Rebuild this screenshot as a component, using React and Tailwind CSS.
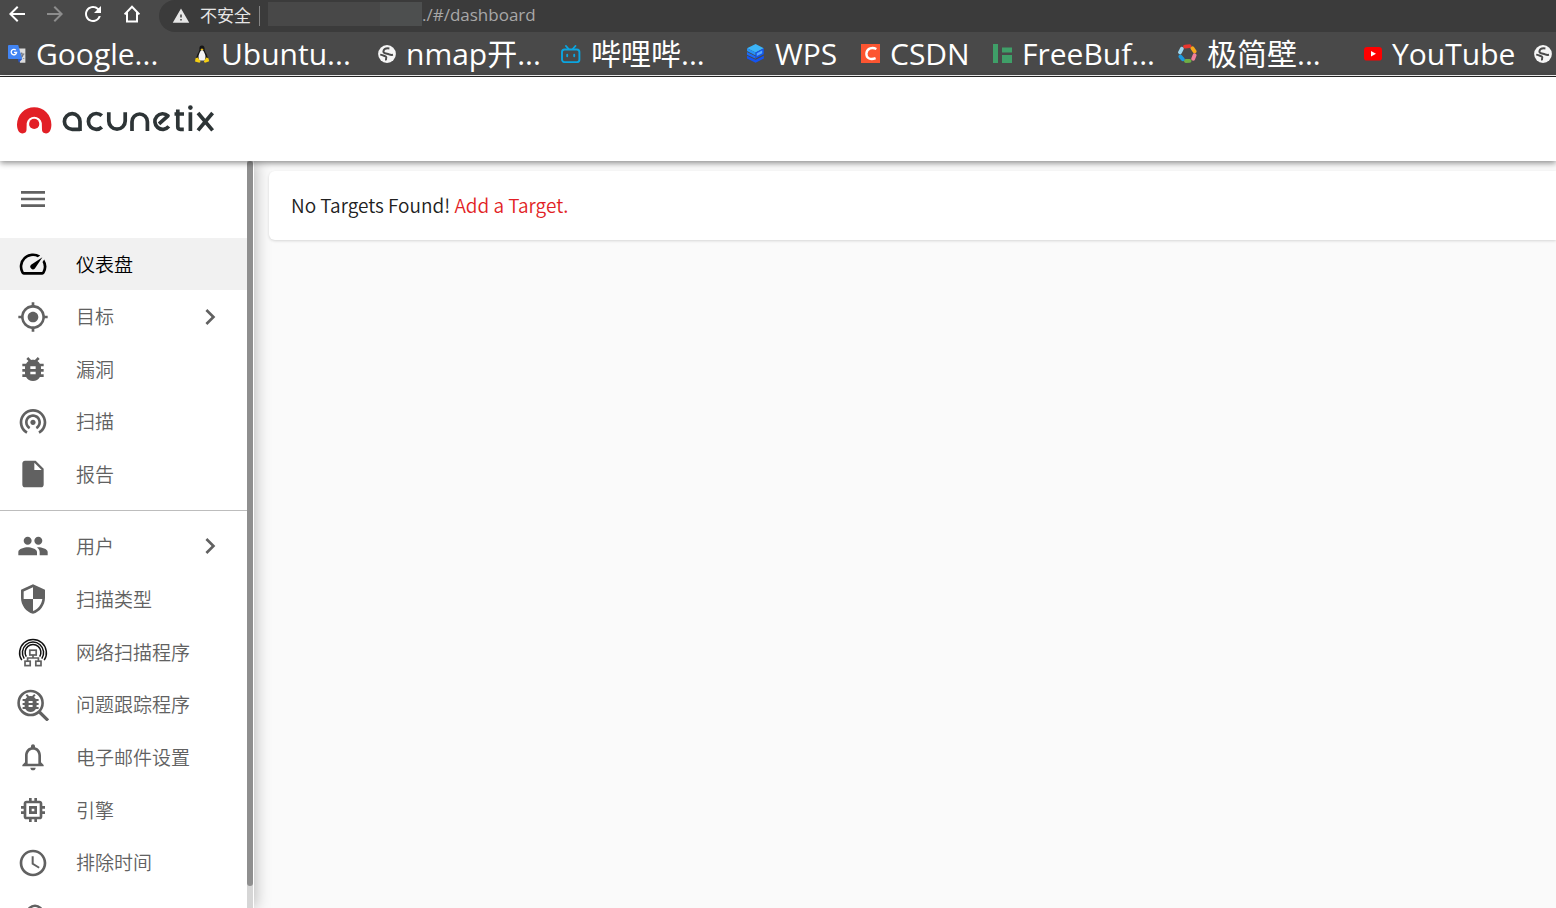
import { MdMenu, MdOutlineSpeed, MdMyLocation, MdBugReport, MdWifiTethering, MdInsertDriveFile, MdPeople, MdSecurity, MdNotificationsNone, MdMemory, MdAccessTime, MdChevronRight, MdWarning, MdArrowBack, MdArrowForward, MdRefresh } from 'react-icons/md';

function HomeIcon() {
  return (
    <svg viewBox="0 0 24 24" className="size-6" fill="none" stroke="currentColor" strokeWidth="2" aria-hidden="true">
      <path d="M5.600 12.400L13 4.800l7.400 7.600M8 10.400v9.100h10v-9.100" />
    </svg>
  );
}

function GlobeIcon() {
  return (
    <svg viewBox="0 0 18 18" className="size-[18px]" aria-hidden="true">
      <circle cx="9" cy="9" r="8.900" fill="#f5f5f5" />
      <path d="M11.400 3.400C8.400 3 5.800 4 5.400 6.400c-.2 2 2 2.200 3.800 2.400 2.200.2 2.400 1.600 5.800 1" fill="none" stroke="#4a4a4a" strokeWidth="2" />
      <path d="M2.200 9.600c2 .2 2.800 1 4.400 1.400 2 .6 2 1.600 1.400 2.800-.2.600 0 1 .2 1.600" fill="none" stroke="#4a4a4a" strokeWidth="1.900" />
    </svg>
  );
}

function TranslateIcon() {
  return (
    <svg viewBox="0 0 18 18" className="size-[18px]" aria-hidden="true">
      <path d="M8 3.600h9.400v14.200H12z" fill="#dcdcdc" />
      <path d="M11 9h5.400M13.700 7.400V9M15.400 9c-.6 2.400-2.200 3.800-3.600 4.600M12.400 9.400c.8 2 2.400 3.600 3.800 4.200" fill="none" stroke="#6b7280" strokeWidth="1.100" />
      <path d="M1 0h9.200l4 14H1a1 1 0 0 1-1-1V1a1 1 0 0 1 1-1z" fill="#4285f4" />
      <path d="M9.800 14h4.400l-3.400 3.800z" fill="#2a56c6" />
      <path d="M7.800 5.100A2.700 2.700 0 1 0 8.600 7.400H6" fill="none" stroke="#fff" strokeWidth="1.300" />
    </svg>
  );
}

function PenguinIcon() {
  return (
    <svg viewBox="0 0 18 18" className="size-[18px]" aria-hidden="true">
      <path d="M9 .4C7 .4 6.200 2 6.400 4c.1 2-.6 2.800-1.600 4.600C3.600 10.800 3 13 3.600 15h10.800c.6-2.200 0-4.400-1.200-6.400-1-1.800-1.600-2.600-1.600-4.600C11.600 1.800 10.800.4 9 .4z" fill="#161616" />
      <path d="M9 5c-1.600.6-2.200 2.200-2.900 4-.8 2-.9 4.200.4 6.400h5c1.300-2.200 1.200-4.400.4-6.400C11.200 7.200 10.600 5.600 9 5z" fill="#f4f4f4" />
      <path d="M7.400 4.200L9 3.500l1.600.7L9 5.600z" fill="#f5c518" />
      <path d="M2.600 13.200l2.200-.6 2.600 3.600c.2 1.200-.8 1.600-1.800 1.400L2 16.600zM15.400 13.200l-2.200-.6-2.200 3.600c-.2 1.200.8 1.600 1.800 1.400l3.400-1.400z" fill="#f5cf12" />
    </svg>
  );
}

function TvIcon() {
  return (
    <svg viewBox="0 0 20 18" className="h-[18px] w-5" fill="none" stroke="#0ba5e0" strokeWidth="1.900" strokeLinecap="round" aria-hidden="true">
      <rect x="1" y="4.500" width="17.400" height="12.600" rx="2.600" />
      <path d="M5 1l2.600 3M14.400 1l-2.600 3M6.200 9.800v1.400M13.200 9.800v1.400" />
    </svg>
  );
}

function StackIcon() {
  return (
    <svg viewBox="0 0 19 19" className="size-[19px]" aria-hidden="true">
      <path d="M1 11.800l8.600 4 8.200-4v2.800l-8.200 4.200L1 14.600z" fill="#1454f0" />
      <path d="M1 8l8.600 4.200v2.600L1 10.800z" fill="#1e6cf5" />
      <path d="M9.600 0l8.200 4.200-8.200 4.200L1 4.200z" fill="#3cb4f7" />
      <path d="M1 4.200l8.600 4.200v3L1 7z" fill="#2592f7" />
      <path d="M17.800 4.200L9.600 8.400v6l8.200-4.200z" fill="#1257ee" />
      <path d="M10.800 9.200l5.400-2.800v2.800l-5.400 2.800z" fill="#5aa8fa" />
    </svg>
  );
}

function CsdnIcon() {
  return (
    <svg viewBox="0 0 19 19" className="size-[19px]" aria-hidden="true">
      <rect width="19" height="19" fill="#fc5531" />
      <path d="M15.400 5C11.600 3.200 6 3.800 5.400 9.400c-.4 5.400 4.600 6.600 9.200 4.800" fill="none" stroke="#fff" strokeWidth="2.400" />
    </svg>
  );
}

function BufIcon() {
  return (
    <svg viewBox="0 0 19 19" className="size-[19px]" fill="#3f9f68" aria-hidden="true">
      <path d="M0 0h5v19H0zM9 3.500h10v5H9zM9 11h10v8H9z" />
    </svg>
  );
}

function RingIcon() {
  return (
    <svg viewBox="0 0 19 19" className="size-[19px]" fill="none" strokeWidth="3.800" strokeLinecap="round" aria-hidden="true">
      <path d="M7 2.600l4.600-.4" stroke="#e8362f" />
      <path d="M14.400 4.200l2.200 3.200" stroke="#f7a81b" />
      <path d="M16.600 11.200l-1.400 3.600" stroke="#f0809c" />
      <path d="M11.600 16.800l-3.800.2" stroke="#6fae45" />
      <path d="M4.800 15.200l-2.400-2.800" stroke="#1b9be0" />
      <path d="M2 8.400l1.800-3.600" stroke="#9bd5ee" />
    </svg>
  );
}

function PlayIcon() {
  return (
    <svg viewBox="0 0 18 14" className="h-3.5 w-[18px]" aria-hidden="true">
      <rect width="18" height="13.600" rx="3.200" fill="#f00" />
      <path d="M7 4l5 2.800L7 9.600z" fill="#fff" />
    </svg>
  );
}

function NetworkScannerIcon() {
  return (
    <svg viewBox="0 0 32 32" className="size-8" fill="none" aria-hidden="true">
      <g stroke="#111" strokeWidth="1.500">
        <path d="M4.800 24.200A13.400 13.400 0 1 1 27.200 24.200" />
        <path d="M7.200 22.600A10.600 10.600 0 1 1 24.800 22.600" />
        <path d="M9.300 20.600A7.900 7.900 0 1 1 22.700 20.600" />
      </g>
      <g stroke="#616161" strokeWidth="1.700">
        <rect x="12.800" y="14.200" width="6.400" height="4.800" fill="#fff" />
        <rect x="8" y="25.200" width="5.200" height="4.400" />
        <rect x="18.800" y="25.200" width="5.200" height="4.400" />
        <path d="M16 19v3M10.600 25v-3h10.800v3" />
      </g>
    </svg>
  );
}

function IssueTrackerIcon() {
  return (
    <svg viewBox="0 0 32 32" className="size-8" aria-hidden="true">
      <circle cx="13.600" cy="14" r="12" fill="none" stroke="#616161" strokeWidth="2.600" />
      <path d="M22.400 23l8.600 8.400" stroke="#616161" strokeWidth="3.200" />
      <path transform="translate(1.600 2)" fill="#616161" d="M20 8h-2.810c-.45-.78-1.070-1.450-1.820-1.960L17 4.410 15.590 3l-2.170 2.170C12.960 5.060 12.490 5 12 5c-.49 0-.96.06-1.410.17L8.410 3 7 4.410l1.620 1.630C7.880 6.550 7.260 7.220 6.810 8H4v2h2.090c-.05.33-.09.66-.09 1v1H4v2h2v1c0 .34.04.67.09 1H4v2h2.810c1.040 1.790 2.970 3 5.190 3s4.150-1.210 5.190-3H20v-2h-2.090c.05-.33.09-.66.09-1v-1h2v-2h-2v-1c0-.34-.04-.67-.09-1H20V8zm-6 8h-4v-2h4v2zm0-4h-4v-2h4v2z" />
    </svg>
  );
}

function ProxyIcon() {
  return (
    <svg viewBox="0 0 32 32" className="size-8" fill="none" stroke="#616161" strokeWidth="2.600" aria-hidden="true">
      <circle cx="18" cy="11.300" r="7.500" />
      <path d="M18 18.800V28M6 28h22" />
    </svg>
  );
}

function Logo() {
  return (
    <svg viewBox="0 0 200 32" className="h-8 w-[200px]" role="img" aria-label="acunetix">
      <path d="M5.600 29.500C2 29.500 0 25.500 0 20.500A17.200 17.200 0 0 1 34.400 20.500C34.400 25.500 32.500 29.500 29 29.500c-2.400 0-4-1.600-4-3.400l-.2-7.200A7.700 7.700 0 0 0 9.700 18.900L9.500 26.100c0 1.800-1.600 3.400-3.900 3.400z" fill="#e21f26" />
      <circle cx="17.200" cy="19.900" r="5.100" fill="#e21f26" />
      <g fill="none" stroke="#2d3436" strokeWidth="3.700" strokeLinejoin="round">
        <path d="M63 27V17.500A7.800 7.800 0 1 0 55.200 25.300H63" />
        <path d="M84.800 11.700A7.900 7.900 0 1 0 84.800 23.100" />
        <path d="M91.800 8.200v8.800a8.200 8.200 0 0 0 16.400 0V8.200" />
        <path d="M115 27v-9.300a7.700 7.700 0 0 1 15.400 0V27" />
        <path d="M151.800 22.400A7.800 7.800 0 1 1 151 11.800L142 19.800" />
        <path d="M160.800 5.500v17.300q0 2.500 2.500 2.500h3.500M157.500 10h9.500M173.400 8.200V27M181 9L195.600 26.400M195.600 9L181 26.400" />
      </g>
      <circle cx="173.400" cy="3.600" r="2.300" fill="#2d3436" />
    </svg>
  );
}

const bookmarks = [
  { label: 'Google...', icon: TranslateIcon, width: 'w-[185px]' },
  { label: 'Ubuntu...', icon: PenguinIcon, width: 'w-[185px]' },
  { label: 'nmap开...', icon: GlobeIcon, width: 'w-[183px]' },
  { label: '哔哩哔...', icon: TvIcon, width: 'w-[185px]' },
  { label: 'WPS', icon: StackIcon, width: 'w-[115px]' },
  { label: 'CSDN', icon: CsdnIcon, width: 'w-[132px]' },
  { label: 'FreeBuf...', icon: BufIcon, width: 'w-[185px]' },
  { label: '极简壁...', icon: RingIcon, width: 'w-[186px]' },
  { label: 'YouTube', icon: PlayIcon, width: 'w-[170px]' },
  { label: '', icon: GlobeIcon, width: 'w-[22px]' },
];

const primary = [
  { label: '仪表盘', icon: MdOutlineSpeed, active: true },
  { label: '目标', icon: MdMyLocation, more: true },
  { label: '漏洞', icon: MdBugReport },
  { label: '扫描', icon: MdWifiTethering },
  { label: '报告', icon: MdInsertDriveFile },
];

const secondary = [
  { label: '用户', icon: MdPeople, more: true },
  { label: '扫描类型', icon: MdSecurity },
  { label: '网络扫描程序', icon: NetworkScannerIcon },
  { label: '问题跟踪程序', icon: IssueTrackerIcon },
  { label: '电子邮件设置', icon: MdNotificationsNone },
  { label: '引擎', icon: MdMemory },
  { label: '排除时间', icon: MdAccessTime },
];

function BrowserBar() {
  return (
    <div className="shrink-0 overflow-hidden border-b border-white bg-[#494949] font-['Open_Sans','Noto_Sans_CJK_SC',sans-serif] text-white">
      <div className="flex h-8 items-start">
        <div className="flex w-[159px] shrink-0 items-center gap-[14px] pl-[5px] pt-0.5">
          <button aria-label="Back"><MdArrowBack className="size-6" /></button>
          <button aria-label="Forward" className="text-[#8d8d8d]"><MdArrowForward className="size-6" /></button>
          <button aria-label="Reload"><MdRefresh className="size-6" /></button>
          <button aria-label="Home"><HomeIcon /></button>
        </div>
        <div className="flex h-8 flex-1 items-center rounded-l-full bg-[#3b3b3b] pl-[13px] text-[17px] leading-[30px]">
          <MdWarning className="size-[18px] text-[#e6e6e6]" />
          <span className="ml-2.5 text-[#e6e6e6]">不安全</span>
          <span className="ml-2 h-5 w-px bg-[#858585]" />
          <span className="mb-1 ml-2 flex h-6 w-[154px] bg-[#484848]">
            <span className="ml-28 w-[42px] bg-[#4d4f4f]" />
          </span>
          <span className="h-8 text-[#a8a8a8]">./#/dashboard</span>
        </div>
      </div>
      <nav aria-label="Bookmarks" className="flex h-[43px] items-center pl-2">
        {bookmarks.map(({ label, icon: Icon, width }, i) => (
          <a key={i} href="#bookmark" aria-label={label || 'Bookmark'} className={`flex shrink-0 items-center gap-2.5 whitespace-nowrap text-[30px] leading-[43px] ${width}`}>
            <span className="shrink-0"><Icon /></span>
            {label}
          </a>
        ))}
      </nav>
    </div>
  );
}

function MenuItem({ label, icon: Icon, active, more }) {
  return (
    <a href="#menu" className={`flex min-h-0 flex-1 items-center pl-[17px] pr-[21px] text-[19px] font-[350] ${active ? 'bg-[#f1f1f1] text-black' : 'text-[#616161]'}`}>
      <Icon className="size-8 shrink-0" />
      <span className="ml-[27px] flex-1 whitespace-nowrap">{label}</span>
      {more && <MdChevronRight className="size-8" />}
    </a>
  );
}

export default function App() {
  return (
    <div className="flex h-screen flex-col overflow-hidden bg-[#fafafa] font-['Noto_Sans_CJK_SC',sans-serif]">
      <BrowserBar />
      <header className="z-10 flex h-[85px] shrink-0 items-center border-t border-[#222] bg-white pl-[17px] pt-0.5 shadow-[0_2px_6px_rgba(0,0,0,0.45)]">
        <Logo />
      </header>
      <div className="flex min-h-0 flex-1">
        <aside className="flex w-[254px] shrink-0 bg-white shadow-[2px_0_14px_rgba(0,0,0,0.25)]">
          <nav aria-label="Main" className="flex min-w-0 flex-1 flex-col overflow-hidden">
            <button aria-label="Menu" className="flex h-[77px] shrink-0 items-center pb-0.5 pl-[17px] text-[#616161]">
              <MdMenu className="size-8" />
            </button>
            <div className="flex h-[262px] shrink-0 flex-col">
              {primary.map((item) => <MenuItem key={item.label} {...item} />)}
            </div>
            <hr className="mb-[9px] mt-[10px] shrink-0 border-[#bdbdbd]" />
            <div className="flex h-[369px] shrink-0 flex-col">
              {secondary.map((item) => <MenuItem key={item.label} {...item} />)}
            </div>
            <div className="flex h-[58px] shrink-0 flex-col">
              <MenuItem label="代理设置" icon={ProxyIcon} />
            </div>
          </nav>
          <div className="flex w-[7px] flex-col border-r border-white bg-[#d6d6d6]">
            <div className="h-[97%] rounded-full bg-[#8f8f8f]" />
          </div>
        </aside>
        <main className="min-w-0 flex-1 pl-[15px] pt-[10px]">
          <section className="rounded-l-md bg-white px-[22px] pb-5 pt-[19px] text-[19px] font-[350] leading-[30px] text-[#212121] shadow-[0_1px_3px_rgba(0,0,0,0.15)]">
            No Targets Found! <a href="#targets" className="text-[#e21f26]">Add a Target.</a>
          </section>
        </main>
      </div>
    </div>
  );
}
